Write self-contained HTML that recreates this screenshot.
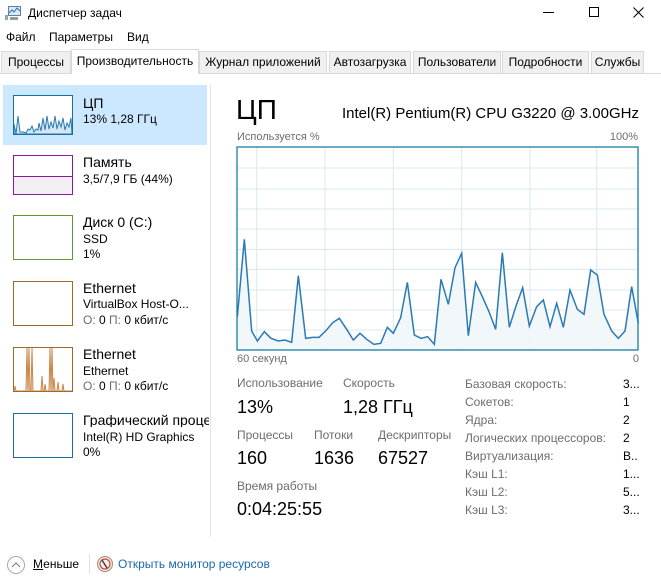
<!DOCTYPE html>
<html><head><meta charset="utf-8">
<style>
*{margin:0;padding:0;box-sizing:border-box}
body{width:661px;height:584px;background:#fff;font-family:"Liberation Sans","Noto Sans CJK SC",sans-serif;font-size:12px;color:#000;position:relative;overflow:hidden}
.a{position:absolute;white-space:nowrap;line-height:1}
.tab{position:absolute;top:51px;height:22px;background:#f0f0f0;border:1px solid #d9d9d9;border-bottom:none;font-size:12px;line-height:21px;text-align:center}
.th{position:absolute;left:13px;width:60px;border:1px solid}
.g{color:#6d6d6d}
.n{font-size:14px}
.lab{color:#6d6d6d;font-size:12px}
.val{font-size:18px}
</style></head><body>
<svg class="a" style="left:5px;top:6px" width="16" height="15" viewBox="0 0 16 15"><rect x="3.5" y="0.5" width="12" height="9" fill="#dbe9f5" stroke="#5a7fa8"/><polyline points="4,7 7,4 9,6 12,2 15,5" fill="none" stroke="#2a6fb0" stroke-width="1"/><rect x="0" y="9" width="3" height="5" fill="#8aa"/><rect x="5" y="11" width="8" height="3" fill="#999"/></svg>
<div class="a" style="left:28px;top:7px;font-size:12px">Диспетчер задач</div>
<div class="a" style="left:543px;top:12px;width:11px;height:1px;background:#000"></div>
<div class="a" style="left:589px;top:7px;width:10px;height:10px;border:1px solid #000"></div>
<svg class="a" style="left:633px;top:7px" width="11" height="11"><path d="M0.5 0.5L10.5 10.5M10.5 0.5L0.5 10.5" stroke="#000" stroke-width="1"/></svg>
<div class="a" style="left:6px;top:31px">Файл</div>
<div class="a" style="left:49px;top:31px">Параметры</div>
<div class="a" style="left:127px;top:31px">Вид</div>
<div class="a" style="left:0;top:73px;width:661px;height:1px;background:#d9d9d9"></div>
<div class="tab" style="left:1px;width:70px">Процессы</div>
<div class="tab" style="left:71px;width:128px;top:49px;height:25px;background:#fff;line-height:23px">Производительность</div>
<div class="tab" style="left:199px;width:128px">Журнал приложений</div>
<div class="tab" style="left:329px;width:82px">Автозагрузка</div>
<div class="tab" style="left:413px;width:88px">Пользователи</div>
<div class="tab" style="left:502px;width:87px">Подробности</div>
<div class="tab" style="left:591px;width:53px">Службы</div>
<div class="a" style="left:3px;top:85px;width:204px;height:60px;background:#cce8ff"></div>
<div class="a" style="left:210px;top:85px;width:1px;height:452px;background:#e3e3e3"></div>
<div class="th" style="top:95px;height:40px;border-color:#1a6ea8;background:#fff">
<svg width="58" height="38" viewBox="0 0 58 38" style="display:block"><polygon points="0,38 0,28 2,38 4,20 6,36 9,36 12,37 14,33 16,34 18,30 20,36 22,33 24,34 25,27 27,35 29,22 31,34 33,20 35,33 37,26 39,32 41,20 43,33 45,25 47,31 49,22 51,34 53,27 55,31 57,22 58,38" fill="#d5e6f3" stroke="#2a7ab5" stroke-width="1"/></svg></div>
<div class="th" style="top:155px;height:40px;border-color:#8b1a9b;background:linear-gradient(#fff 0,#fff 20px,#8b1a9b 20px,#8b1a9b 21px,#f3eef4 21px)"></div>
<div class="th" style="top:215px;height:45px;border-color:#5c9a2e"></div>
<div class="th" style="top:281px;height:45px;border-color:#a0682a"></div>
<div class="th" style="top:347px;height:45px;border-color:#a0682a">
<svg width="58" height="43" viewBox="0 0 58 43" style="display:block"><polyline points="0,43 1,38 2,43 12,43 13,0 14,43 15,0 16,43 17,43 18,0 19,43 27,43 28,28 29,43 30,43 31,36 32,43 35,43 36,0 37,43 38,0 39,43 40,30 41,43 43,43 44,34 45,43 48,43 49,36 50,43 58,43" fill="#f3e3d3" stroke="#c8874a" stroke-width="1"/></svg></div>
<div class="th" style="top:413px;height:45px;border-color:#1a6ea8"></div>

<div class="a n" style="left:83px;top:96px">ЦП</div>
<div class="a" style="left:83px;top:113px">13% 1,28 ГГц</div>
<div class="a n" style="left:83px;top:155px">Память</div>
<div class="a" style="left:83px;top:173px">3,5/7,9 ГБ (44%)</div>
<div class="a n" style="left:83px;top:215px">Диск 0 (C:)</div>
<div class="a" style="left:83px;top:233px">SSD</div>
<div class="a" style="left:83px;top:248px">1%</div>
<div class="a n" style="left:83px;top:281px">Ethernet</div>
<div class="a" style="left:83px;top:298px">VirtualBox Host-O...</div>
<div class="a" style="left:83px;top:314px"><span class="g">О:</span> 0 <span class="g">П:</span> 0 кбит/с</div>
<div class="a n" style="left:83px;top:347px">Ethernet</div>
<div class="a" style="left:83px;top:365px">Ethernet</div>
<div class="a" style="left:83px;top:380px"><span class="g">О:</span> 0 <span class="g">П:</span> 0 кбит/с</div>
<div class="a n" style="left:83px;top:413px;width:126px;overflow:hidden">Графический процессор</div>
<div class="a" style="left:83px;top:431px">Intel(R) HD Graphics</div>
<div class="a" style="left:83px;top:446px">0%</div>

<div class="a" style="left:236px;top:96px;font-size:28px">ЦП</div>
<div class="a" style="right:22px;top:106px;font-size:15px">Intel(R) Pentium(R) CPU G3220 @ 3.00GHz</div>
<div class="a lab" style="left:237px;top:132px;font-size:11px">Используется %</div>
<div class="a lab" style="right:23px;top:132px;font-size:11px">100%</div>
<svg class="a" style="left:230px;top:140px" width="420" height="220" viewBox="0 -240 1260 660">
<g stroke="#d9e8f1" stroke-width="3">
<path d="M21 -156H1224M21 -93H1224M21 -33H1224M21 27H1224M21 88H1224M21 148H1224M21 210H1224M21 270H1224M21 330H1224"/>
<path d="M80 -219V390M285 -219V390M490 -219V390M695 -219V390M900 -219V390M1100 -219V390"/>
</g>
<polygon fill="#f1f6fa" fill-opacity="0.9" points="22,290 43,58 65,333 82,363 103,335 123,355 145,363 165,360 185,367 205,167 227,355 247,352 267,352 288,332 308,308 328,295 350,328 370,360 390,340 410,358 432,373 452,370 472,322 490,340 512,293 532,187 553,345 573,355 593,350 613,373 633,178 655,253 675,143 695,100 715,347 737,187 757,230 777,275 797,328 817,98 838,322 858,258 878,203 898,318 920,260 940,240 960,320 980,250 1000,322 1020,210 1042,268 1062,283 1082,150 1102,165 1122,283 1145,333 1165,355 1185,333 1205,200 1225,310 1224,390 21,390"/>
<polyline fill="none" stroke="#2a7ab5" stroke-width="4.5" points="22,290 43,58 65,333 82,363 103,335 123,355 145,363 165,360 185,367 205,167 227,355 247,352 267,352 288,332 308,308 328,295 350,328 370,360 390,340 410,358 432,373 452,370 472,322 490,340 512,293 532,187 553,345 573,355 593,350 613,373 633,178 655,253 675,143 695,100 715,347 737,187 757,230 777,275 797,328 817,98 838,322 858,258 878,203 898,318 920,260 940,240 960,320 980,250 1000,322 1020,210 1042,268 1062,283 1082,150 1102,165 1122,283 1145,333 1165,355 1185,333 1205,200 1225,310"/>
<rect x="21" y="-219" width="1203" height="609" fill="none" stroke="#1f7fa8" stroke-width="4"/>
</svg>
<div class="a lab" style="left:237px;top:354px;font-size:11px">60 секунд</div>
<div class="a lab" style="right:22px;top:354px;font-size:11px">0</div>

<div class="a lab" style="left:237px;top:377px">Использование</div>
<div class="a lab" style="left:343px;top:377px">Скорость</div>
<div class="a val" style="left:237px;top:398px">13%</div>
<div class="a val" style="left:343px;top:398px">1,28 ГГц</div>
<div class="a lab" style="left:237px;top:429px">Процессы</div>
<div class="a lab" style="left:314px;top:429px">Потоки</div>
<div class="a lab" style="left:378px;top:429px">Дескрипторы</div>
<div class="a val" style="left:237px;top:449px">160</div>
<div class="a val" style="left:314px;top:449px">1636</div>
<div class="a val" style="left:378px;top:449px">67527</div>
<div class="a lab" style="left:237px;top:480px">Время работы</div>
<div class="a val" style="left:237px;top:500px">0:04:25:55</div>

<div class="a lab" style="left:465px;top:375px;line-height:18px">Базовая скорость:<br>Сокетов:<br>Ядра:<br>Логических процессоров:<br>Виртуализация:<br>Кэш L1:<br>Кэш L2:<br>Кэш L3:</div>
<div class="a" style="left:623px;top:375px;line-height:18px">3...<br>1<br>2<br>2<br>В..<br>1...<br>5...<br>3...</div>

<svg class="a" style="left:6px;top:555px" width="20" height="20"><circle cx="10" cy="10" r="8.5" fill="#fff" stroke="#aaa"/><path d="M6 12L10 8L14 12" fill="none" stroke="#888" stroke-width="1.2"/></svg>
<div class="a" style="left:33px;top:558px"><u>М</u>еньше</div>
<div class="a" style="left:89px;top:554px;width:1px;height:20px;background:#e0e0e0"></div>
<svg class="a" style="left:96px;top:555px" width="18" height="18"><circle cx="9" cy="9" r="7.5" fill="#f4f0e8" stroke="#a89a80" stroke-width="1.2"/><circle cx="9" cy="9" r="5" fill="none" stroke="#c44" stroke-width="1.2"/><path d="M6 5L11 13" stroke="#333" stroke-width="1.3"/></svg>
<div class="a" style="left:118px;top:558px;color:#1a6aa8">Открыть монитор ресурсов</div>
</body></html>
